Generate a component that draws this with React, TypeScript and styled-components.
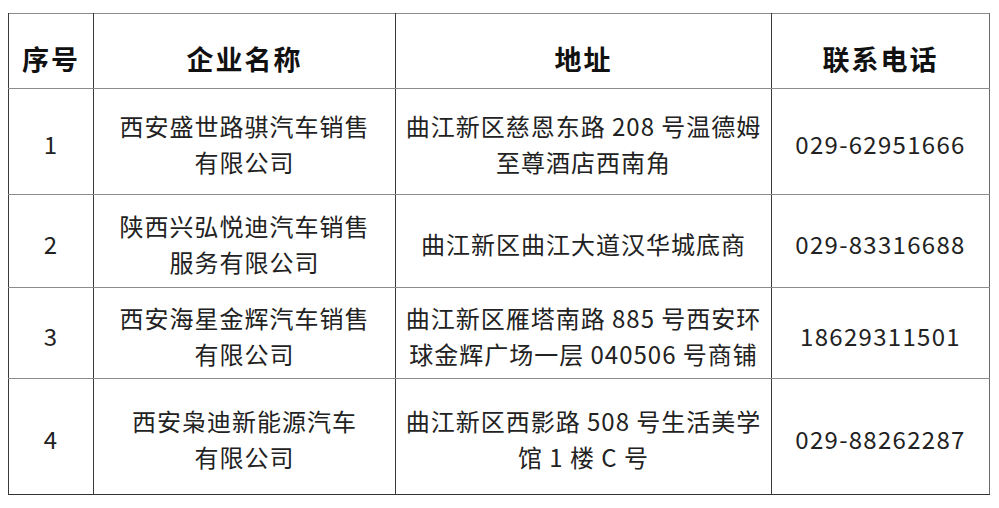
import React from "react";
import styled, { createGlobalStyle } from "styled-components";

const GlobalStyle = createGlobalStyle`
  html, body {
    margin: 0;
    padding: 0;
    background: #ffffff;
  }
  body {
    font-family: "Noto Sans CJK SC", "Noto Sans", sans-serif;
    color: #222222;
  }
`;

const Page = styled.div`
  padding: 13px 10px 0 8px;
  width: 999px;
  height: 508px;
  box-sizing: border-box;
`;

const Table = styled.table`
  border-collapse: collapse;
  table-layout: fixed;
  width: 981px;
  border-left: 1px solid #3a3a3a;
  border-right: 1px solid #6a6a6a;
  border-top: 1px solid #8c8c8c;
  border-bottom: 1px solid #333333;
`;

const HeadCell = styled.th`
  height: 75px;
  padding: 14px 0 0;
  box-sizing: border-box;
  font-size: 27px;
  font-weight: 700;
  color: #111111;
  text-align: center;
  vertical-align: middle;
  border-left: 1px solid #3a3a3a;
  border-bottom: 1px solid #8c8c8c;
  letter-spacing: 2px;
`;

const Row = styled.tr<{ h: number }>`
  height: ${(p) => p.h}px;
`;

const Cell = styled.td<{ last?: boolean; digits?: boolean }>`
  padding: 5px 0 0;
  font-size: 24px;
  line-height: 36px;
  text-align: center;
  vertical-align: middle;
  border-left: 1px solid #3a3a3a;
  border-bottom: ${(p) => (p.last ? "none" : "1px solid #8c8c8c")};
  white-space: nowrap;
  letter-spacing: ${(p) => (p.digits ? "1.3px" : "1px")};
`;

const Line = styled.div`
  display: block;
`;

interface Dealer {
  no: string;
  name: string[];
  address: string[];
  phone: string;
  height: number;
}

const dealers: Dealer[] = [
  {
    no: "1",
    name: ["西安盛世路骐汽车销售", "有限公司"],
    address: ["曲江新区慈恩东路 208 号温德姆", "至尊酒店西南角"],
    phone: "029-62951666",
    height: 106,
  },
  {
    no: "2",
    name: ["陕西兴弘悦迪汽车销售", "服务有限公司"],
    address: ["曲江新区曲江大道汉华城底商"],
    phone: "029-83316688",
    height: 93,
  },
  {
    no: "3",
    name: ["西安海星金辉汽车销售", "有限公司"],
    address: ["曲江新区雁塔南路 885 号西安环", "球金辉广场一层 040506 号商铺"],
    phone: "18629311501",
    height: 91,
  },
  {
    no: "4",
    name: ["西安枭迪新能源汽车", "有限公司"],
    address: ["曲江新区西影路 508 号生活美学", "馆 1 楼 C 号"],
    phone: "029-88262287",
    height: 116,
  },
];

const App: React.FC = () => {
  return (
    <Page>
      <GlobalStyle />
      <Table>
        <colgroup>
          <col style={{ width: 85 }} />
          <col style={{ width: 302 }} />
          <col style={{ width: 376 }} />
          <col style={{ width: 218 }} />
        </colgroup>
        <thead>
          <tr>
            <HeadCell>序号</HeadCell>
            <HeadCell>企业名称</HeadCell>
            <HeadCell>地址</HeadCell>
            <HeadCell>联系电话</HeadCell>
          </tr>
        </thead>
        <tbody>
          {dealers.map((d, i) => {
            const last = i === dealers.length - 1;
            return (
              <Row key={d.no} h={d.height}>
                <Cell last={last}>{d.no}</Cell>
                <Cell last={last}>
                  {d.name.map((t) => (
                    <Line key={t}>{t}</Line>
                  ))}
                </Cell>
                <Cell last={last}>
                  {d.address.map((t) => (
                    <Line key={t}>{t}</Line>
                  ))}
                </Cell>
                <Cell last={last} digits>
                  {d.phone}
                </Cell>
              </Row>
            );
          })}
        </tbody>
      </Table>
    </Page>
  );
};

export default App;
